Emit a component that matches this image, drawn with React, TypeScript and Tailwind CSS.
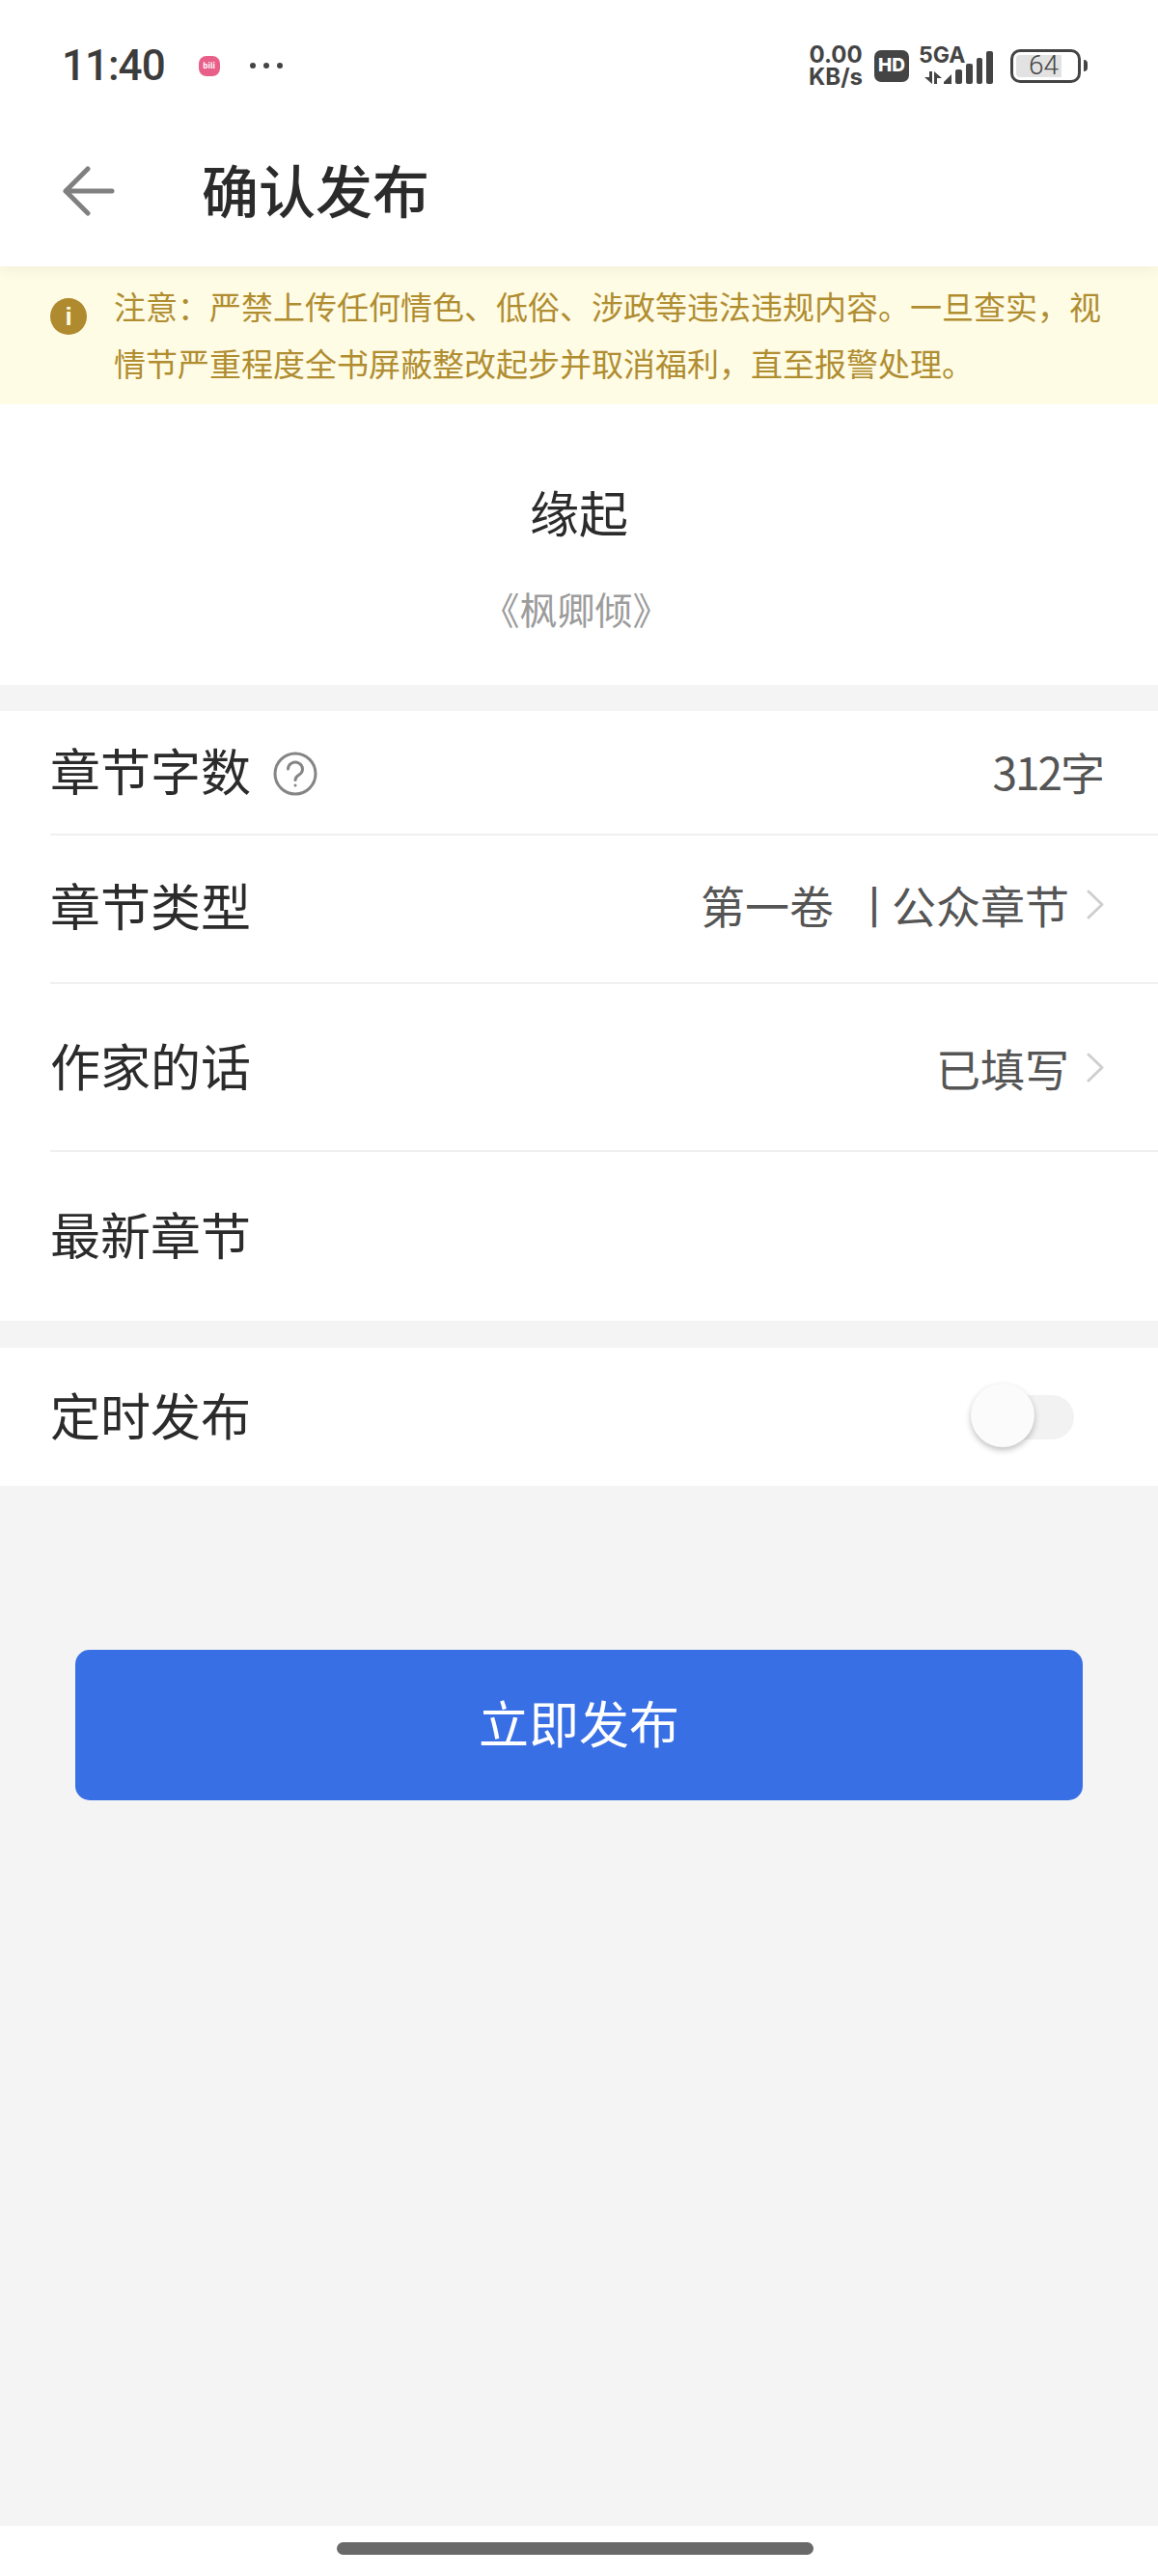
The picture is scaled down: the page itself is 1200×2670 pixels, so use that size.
const font = { fontFamily: '"Noto Sans CJK SC", "Noto Sans", sans-serif' }

function StatusIcons() {
  return (
    <div className="flex items-center">
      <div className="flex flex-col items-center text-[#444] font-bold text-[24px] font-['Inter',sans-serif]">
        <div className="h-[23px] leading-[23px]">0.00</div>
        <div className="h-[23px] leading-[23px]">KB/s</div>
      </div>
      <div className="ml-[12px] flex h-[33px] w-[36px] items-center justify-center rounded-[7px] bg-[#444] text-[19px] font-extrabold text-white font-['Inter',sans-serif]">
        HD
      </div>
      <svg className="ml-[10px]" width="80" height="48" viewBox="0 0 80 48" fill="#444">
        <text x="0" y="21" fontSize="23" fontWeight="700" fontFamily="Inter, sans-serif">5GA</text>
        <path d="M11 30h3v13l-8-7h5zM16 30l8 7h-5v6h-3z" />
        <path d="M26 43v-2l8-8v10z" />
        <rect x="38" y="28" width="7" height="15" rx="2" />
        <rect x="49" y="22" width="7" height="21" rx="2" />
        <rect x="60" y="16" width="6" height="27" rx="2" />
        <rect x="70" y="9" width="7" height="34" rx="2" />
      </svg>
      <div className="ml-[15px] flex h-[35px] w-[73px] items-center rounded-[10px] border-[3px] border-[#444] p-[3px]">
        <div className="flex h-full w-[47px] items-center rounded-l-[4px] bg-[#e2e2e2]">
          <span className="ml-[13px] text-[28px] font-light leading-none text-[#444] font-['Roboto',sans-serif]">64</span>
        </div>
      </div>
      <div className="ml-[3px] h-[12px] w-[4px] rounded-r-full bg-[#444]" />
    </div>
  )
}

function Row({ label, className, children }: { label: string; className: string; children?: React.ReactNode }) {
  return (
    <div className={`flex items-center justify-between pr-[56px] ${className}`}>
      <span className="-mt-[5px] text-[52px] leading-none text-[#2b2b2b]">{label}</span>
      {children}
    </div>
  )
}

function Chevron() {
  return (
    <svg className="ml-[18px]" width="18" height="31" viewBox="0 0 18 31" fill="none" stroke="#cfcfcf" strokeWidth="3" strokeLinecap="round" strokeLinejoin="round">
      <path d="M2 2l14 13.500L2 29" />
    </svg>
  )
}

export default function App() {
  return (
    <div style={font} className="flex min-h-[2670px] w-[1200px] flex-col bg-[#f4f4f4]">
      {/* status bar + title */}
      <div className="relative z-10 h-[276px] bg-white shadow-[0_4px_14px_rgba(0,0,0,0.05)]">
        <div className="flex h-[136px] items-center justify-between pl-[64px] pr-[73px]">
          <div className="flex items-center">
            <span className="text-[44px] tracking-[-1px] leading-none text-[#3c3c3c] font-['Roboto',sans-serif] font-medium">11:40</span>
            <div className="ml-[35px] flex h-[21px] w-[22px] items-center justify-center rounded-[8px] bg-[#e8608a]">
              <span className="text-[8px] font-bold leading-none text-white">bili</span>
            </div>
            <div className="ml-[31px] flex gap-[8px]">
              <div className="h-[6px] w-[6px] rounded-full bg-[#444]" />
              <div className="h-[6px] w-[6px] rounded-full bg-[#444]" />
              <div className="h-[6px] w-[6px] rounded-full bg-[#444]" />
            </div>
          </div>
          <StatusIcons />
        </div>
        <div className="flex h-[124px] items-center pl-[65px]">
          <svg width="54" height="52" viewBox="0 0 54 52" fill="none" stroke="#808080" strokeWidth="5" strokeLinecap="round" strokeLinejoin="round">
            <path d="M26 3 3 26l23 23M3 26h48" />
          </svg>
          <span className="-mt-[6px] ml-[90px] text-[59px] font-medium leading-none text-[#2b2b2b]">确认发布</span>
        </div>
      </div>

      {/* notice */}
      <div className="flex h-[143px] items-start bg-[#fffce6] pl-[52px] pr-[50px] pt-[12px]">
        <div className="mt-[21px] flex h-[38px] w-[38px] shrink-0 items-center justify-center rounded-full bg-[#b08a2e] text-[26px] font-bold leading-none text-[#fffce6] font-['Liberation_Sans',sans-serif]">
          i
        </div>
        <p className="ml-[28px] text-[33px] leading-[59px] text-[#b08d30]">
          {'注意\uFF1A严禁上传任何情色、低俗、涉政等违法违规内容。一旦查实\uFF0C视情节严重程度全书屏蔽整改起步并取消福利\uFF0C直至报警处理。'}
        </p>
      </div>

      {/* title */}
      <div className="flex h-[291px] flex-col items-center bg-white pt-[86px]">
        <span className="text-[51px] leading-none text-[#2b2b2b]">缘起</span>
        <span className="-ml-[6px] mt-[55px] text-[39px] leading-none text-[#9c9c9c]">《枫卿倾》</span>
      </div>

      {/* rows */}
      <div className="mt-[27px] bg-white pl-[52px]">
        <Row label="章节字数" className="h-[129px] border-b-2 border-[#f0f0f0]">
          <span className="-mr-[1px] -mt-[3px] text-[46px] leading-none text-[#555]">
            <span className="tracking-[-2px]">312</span>字
          </span>
        </Row>
        <div className="-mt-[129px] flex h-[129px] items-center pl-[231px]">
          <svg width="46" height="46" viewBox="0 0 46 46" fill="none" stroke="#858585" strokeWidth="3">
            <circle cx="23" cy="23" r="21" />
            <path d="M15.500 18a7.500 7 0 1 1 11.500 6c-2.500 1.500-4 2.800-4 5.500" strokeLinecap="round" />
            <circle cx="23" cy="35" r="1.500" fill="#858585" stroke="none" />
          </svg>
        </div>
        <Row label="章节类型" className="h-[154px] border-b-2 border-[#f0f0f0] pb-[4px]">
          <div className="-mt-[6px] flex items-center text-[46px] leading-none text-[#555]">
            <span>第一卷</span>
            <span className="ml-[19px] w-[41px]">丨</span>
            <span>公众章节</span>
            <Chevron />
          </div>
        </Row>
        <Row label="作家的话" className="h-[174px] border-b-2 border-[#f0f0f0]">
          <div className="flex items-center text-[46px] leading-none text-[#555]">
            <span>已填写</span>
            <Chevron />
          </div>
        </Row>
        <Row label="最新章节" className="h-[175px]" />
      </div>

      <div className="mt-[28px] bg-white pl-[52px]">
        <Row label="定时发布" className="h-[143px]">
          <div className="relative mr-[31px] h-[46px] w-[90px] rounded-full bg-[#f2f2f2]">
            <div className="absolute -left-[17px] -top-[12px] h-[66px] w-[66px] rounded-full bg-[#fbfbfb] shadow-[0_3px_6px_rgba(0,0,0,0.25)]" />
          </div>
        </Row>
      </div>

      {/* publish button */}
      <div className="mx-[78px] mt-[170px] flex h-[156px] items-center justify-center rounded-[15px] bg-[#386fe4] text-[52px] leading-none text-white">
        <span className="-mt-[7px]">立即发布</span>
      </div>

      {/* home indicator */}
      <div className="mt-auto flex h-[52px] items-center justify-center bg-white pb-[6px] pr-[8px]">
        <div className="h-[13px] w-[494px] rounded-full bg-[#696969]" />
      </div>
    </div>
  )
}
